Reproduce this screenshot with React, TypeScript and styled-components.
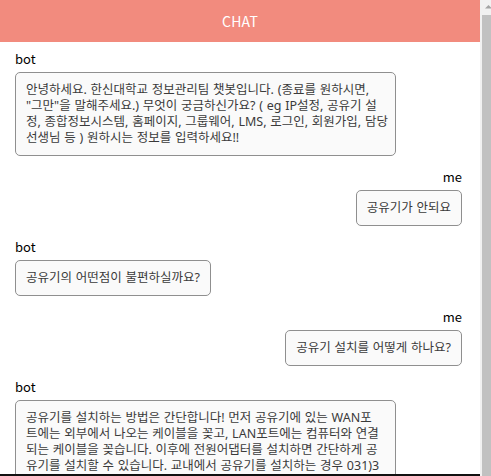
import React from "react";
import styled, { createGlobalStyle } from "styled-components";

const GlobalStyle = createGlobalStyle`
  html, body {
    margin: 0;
    padding: 0;
    overflow: hidden;
    background: #ffffff;
  }
  * { box-sizing: border-box; }
`;

const Window = styled.div`
  display: grid;
  grid-template-columns: 480px 11px;
  grid-template-rows: 530px;
  width: 491px;
  height: 530px;
  overflow: hidden;
`;

const ChatColumn = styled.div`
  display: grid;
  grid-template-rows: 42px minmax(0, 1fr) 56px;
  min-height: 0;
  overflow: hidden;
  background: #ffffff;
`;

const Header = styled.header`
  display: flex;
  align-items: center;
  justify-content: center;
  background: #f28b7e;
  color: #ffffff;
  font-family: "Noto Sans CJK KR", "Noto Sans", sans-serif;
  font-size: 14px;
  letter-spacing: 0.2px;
`;

const MessageList = styled.main`
  min-height: 0;
  overflow: hidden;
  display: flex;
  flex-direction: column;
  gap: 12px;
  padding: 8px 18px 0 15px;
`;

const MessageGroup = styled.section<{ $mine: boolean }>`
  flex: none;
  display: flex;
  flex-direction: column;
  align-items: ${(p) => (p.$mine ? "flex-end" : "flex-start")};
  gap: 4px;
`;

const Sender = styled.div`
  font-family: "Noto Sans CJK KR", "Noto Sans", sans-serif;
  font-size: 13px;
  line-height: 18px;
  color: #000000;
`;

const Bubble = styled.div<{ $multiline: boolean }>`
  width: ${(p) => (p.$multiline ? "381px" : "auto")};
  max-width: 381px;
  padding: 9px 10px;
  border: 1px solid #8f8f8f;
  border-radius: 5px;
  background: #fafafa;
  color: #3a3a3a;
  font-family: "Noto Sans", "Noto Sans CJK KR", sans-serif;
  font-size: 12.5px;
  line-height: 16px;
  word-spacing: 0.5px;
  white-space: pre;
`;

const Composer = styled.form`
  display: flex;
  align-items: center;
  gap: 8px;
  padding: 10px 15px;
  background: #ffffff;
  border-top: 2px solid #111111;
`;

const ComposerInput = styled.input`
  flex: 1;
  height: 34px;
  padding: 0 10px;
  border: 1px solid #999999;
  border-radius: 5px;
  font-family: "Noto Sans", "Noto Sans CJK KR", sans-serif;
  font-size: 12px;
`;

const SendButton = styled.button`
  height: 34px;
  padding: 0 14px;
  border: none;
  border-radius: 5px;
  background: #f28b7e;
  color: #ffffff;
  font-family: "Noto Sans CJK KR", sans-serif;
  font-size: 12px;
`;

const ScrollRail = styled.div`
  display: flex;
  flex-direction: column;
  min-height: 0;
  background: #f1f1f1;
`;

const ScrollArrow = styled.div`
  flex: none;
  height: 15px;
  display: flex;
`;

const ScrollThumb = styled.div`
  flex: 1;
  margin-left: 2px;
  background: #c1c1c1;
`;

type Message = { from: "bot" | "me"; text: string };

const messages: Message[] = [
  {
    from: "bot",
    text:
      '안녕하세요. 한신대학교 정보관리팀 챗봇입니다. (종료를 원하시면,\n"그만"을 말해주세요.) 무엇이 궁금하신가요? ( eg IP설정, 공유기 설\n정, 종합정보시스템, 홈페이지, 그룹웨어, LMS, 로그인, 회원가입, 담당\n선생님 등 ) 원하시는 정보를 입력하세요!!',
  },
  { from: "me", text: "공유기가 안되요" },
  { from: "bot", text: "공유기의 어떤점이 불편하실까요?" },
  { from: "me", text: "공유기 설치를 어떻게 하나요?" },
  {
    from: "bot",
    text:
      "공유기를 설치하는 방법은 간단합니다! 먼저 공유기에 있는 WAN포\n트에는 외부에서 나오는 케이블을 꽂고, LAN포트에는 컴퓨터와 연결\n되는 케이블을 꽂습니다. 이후에 전원어댑터를 설치하면 간단하게 공\n유기를 설치할 수 있습니다. 교내에서 공유기를 설치하는 경우 031)3\n79-0000으로 정보관리팀에 먼저 문의해 주세요.",
  },
];

export default function App() {
  return (
    <>
      <GlobalStyle />
      <Window>
        <ChatColumn>
          <Header>CHAT</Header>
          <MessageList>
            {messages.map((m, i) => (
              <MessageGroup key={i} $mine={m.from === "me"}>
                <Sender>{m.from}</Sender>
                <Bubble $multiline={m.text.includes("\n")}>{m.text}</Bubble>
              </MessageGroup>
            ))}
          </MessageList>
          <Composer onSubmit={(e) => e.preventDefault()}>
            <ComposerInput placeholder="메시지를 입력하세요" />
            <SendButton type="submit">전송</SendButton>
          </Composer>
        </ChatColumn>
        <ScrollRail aria-hidden="true">
          <ScrollArrow>
            <svg width="11" height="15" viewBox="0 0 11 15">
              <polygon points="5,8.6 8.5,5 12,8.6" fill="#a3a3a3" />
            </svg>
          </ScrollArrow>
          <ScrollThumb />
        </ScrollRail>
      </Window>
    </>
  );
}
